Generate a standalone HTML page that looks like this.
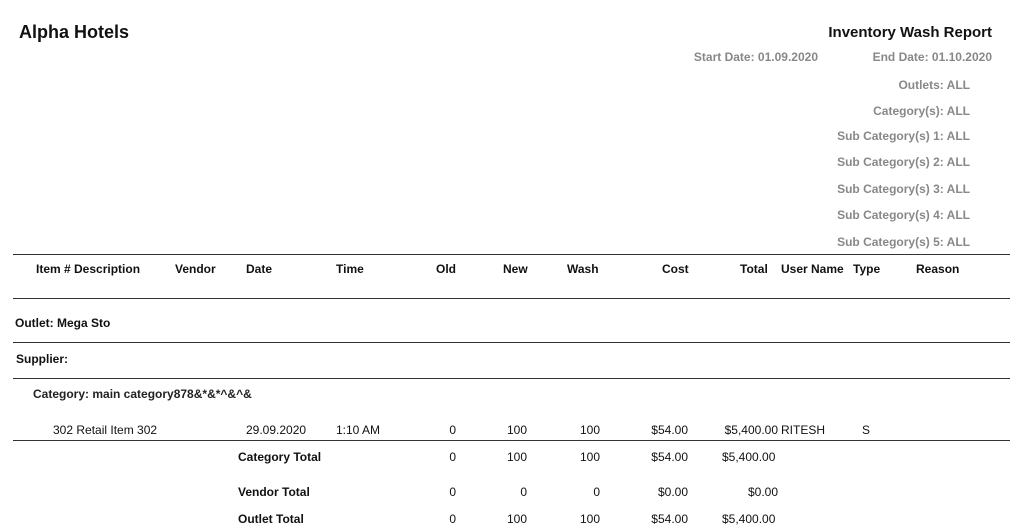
<!DOCTYPE html>
<html><head><meta charset="utf-8"><style>
body{margin:0;width:1010px;height:529px;background:#fff;position:relative;overflow:hidden;font-family:"Liberation Sans",Arial,sans-serif;color:#111}
.t{position:absolute;white-space:nowrap;font-size:12px;line-height:14px}
.b{font-weight:bold}
.g{color:#888;font-weight:bold}
.r{text-align:right}
.c{text-align:center}
.l{position:absolute;left:13px;right:0;height:1px;background:#333}
</style></head><body>
<div class="t b" style="left:19px;top:22px;font-size:18px;line-height:20px">Alpha Hotels</div>
<div class="t b r" style="left:700px;width:292px;top:25px;font-size:15px;line-height:16px">Inventory Wash Report</div>
<div class="t g r" style="left:600px;width:218px;top:50px">Start Date: 01.09.2020</div>
<div class="t g r" style="left:800px;width:192px;top:50px">End Date: 01.10.2020</div>
<div class="t g r" style="left:700px;width:270px;top:78px">Outlets: ALL</div>
<div class="t g r" style="left:700px;width:270px;top:104px">Category(s): ALL</div>
<div class="t g r" style="left:700px;width:270px;top:129px">Sub Category(s) 1: ALL</div>
<div class="t g r" style="left:700px;width:270px;top:155px">Sub Category(s) 2: ALL</div>
<div class="t g r" style="left:700px;width:270px;top:182px">Sub Category(s) 3: ALL</div>
<div class="t g r" style="left:700px;width:270px;top:208px">Sub Category(s) 4: ALL</div>
<div class="t g r" style="left:700px;width:270px;top:235px">Sub Category(s) 5: ALL</div>
<div class="l" style="top:254px"></div>
<div class="t b" style="left:36px;top:262px">Item # Description</div>
<div class="t b" style="left:175px;top:262px">Vendor</div>
<div class="t b" style="left:246px;top:262px">Date</div>
<div class="t b" style="left:336px;top:262px">Time</div>
<div class="t b" style="left:436px;top:262px">Old</div>
<div class="t b" style="left:503px;top:262px">New</div>
<div class="t b" style="left:567px;top:262px">Wash</div>
<div class="t b" style="left:662px;top:262px">Cost</div>
<div class="t b" style="left:740px;top:262px">Total</div>
<div class="t b" style="left:781px;top:262px">User Name</div>
<div class="t b" style="left:853px;top:262px">Type</div>
<div class="t b" style="left:916px;top:262px">Reason</div>
<div class="l" style="top:298px"></div>
<div class="t b" style="left:15px;top:316px">Outlet: Mega Sto</div>
<div class="l" style="top:342px"></div>
<div class="t b" style="left:16px;top:352px">Supplier:</div>
<div class="l" style="top:378px"></div>
<div class="t" style="left:33px;top:387px;font-weight:bold;color:#222">Category: main category878&amp;*&amp;*^&amp;^&amp;</div>
<div class="t" style="left:53px;top:423px">302 Retail Item 302</div>
<div class="t" style="left:246px;top:423px">29.09.2020</div>
<div class="t" style="left:336px;top:423px">1:10 AM</div>
<div class="t r" style="left:400px;width:56px;top:423px">0</div>
<div class="t r" style="left:470px;width:57px;top:423px">100</div>
<div class="t r" style="left:540px;width:60px;top:423px">100</div>
<div class="t r" style="left:620px;width:68px;top:423px">$54.00</div>
<div class="t r" style="left:700px;width:78px;top:423px">$5,400.00</div>
<div class="t" style="left:781px;top:423px">RITESH</div>
<div class="t" style="left:862px;top:423px">S</div>
<div class="l" style="top:440px"></div>
<div class="t b" style="left:238px;top:450px">Category Total</div>
<div class="t r" style="left:400px;width:56px;top:450px">0</div>
<div class="t r" style="left:470px;width:57px;top:450px">100</div>
<div class="t r" style="left:540px;width:60px;top:450px">100</div>
<div class="t r" style="left:620px;width:68px;top:450px">$54.00</div>
<div class="t" style="left:722px;top:450px">$5,400.00</div>
<div class="t b" style="left:238px;top:485px">Vendor Total</div>
<div class="t r" style="left:400px;width:56px;top:485px">0</div>
<div class="t r" style="left:470px;width:57px;top:485px">0</div>
<div class="t r" style="left:540px;width:60px;top:485px">0</div>
<div class="t r" style="left:620px;width:68px;top:485px">$0.00</div>
<div class="t r" style="left:700px;width:78px;top:485px">$0.00</div>
<div class="t b" style="left:238px;top:512px">Outlet Total</div>
<div class="t r" style="left:400px;width:56px;top:512px">0</div>
<div class="t r" style="left:470px;width:57px;top:512px">100</div>
<div class="t r" style="left:540px;width:60px;top:512px">100</div>
<div class="t r" style="left:620px;width:68px;top:512px">$54.00</div>
<div class="t" style="left:722px;top:512px">$5,400.00</div>
</body></html>
